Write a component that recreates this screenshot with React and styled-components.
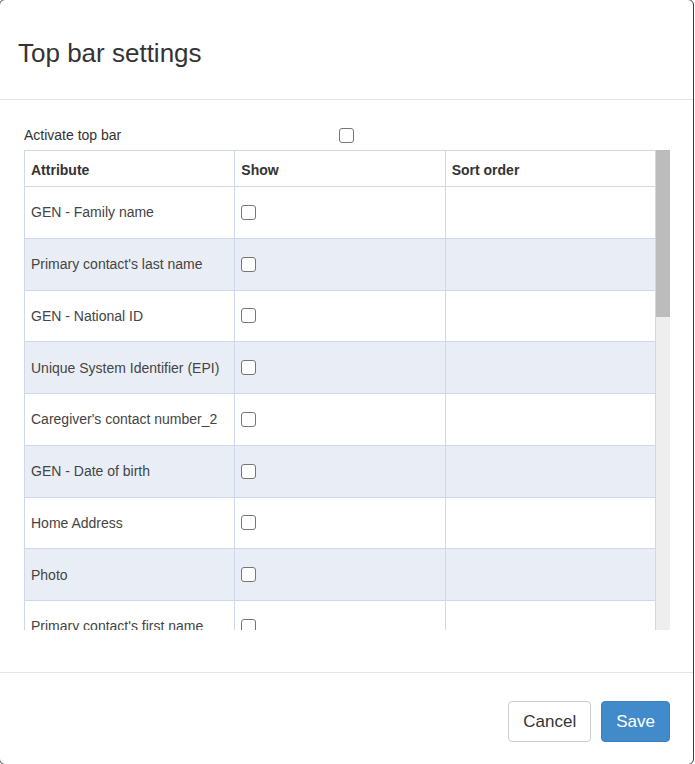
import React from 'react';
import styled, { createGlobalStyle } from 'styled-components';

const GlobalStyle = createGlobalStyle`
    html, body {
        margin: 0;
        padding: 0;
        background: #ffffff;
        overflow: hidden;
    }
    body {
        font-family: "Liberation Sans", Arial, sans-serif;
        color: #333;
    }
    * {
        box-sizing: border-box;
    }
`;

const Modal = styled.div`
    width: 695px;
    height: 766px;
    margin: -1px 0 0 -1px;
    background: #fff;
    border: 1px solid #3d3d3d;
    border-radius: 6px;
    display: flex;
    flex-direction: column;
    overflow: hidden;
`;

const Header = styled.div`
    height: 100px;
    flex: none;
    display: flex;
    align-items: center;
    padding: 0 18px;
    border-bottom: 1px solid #e5e5e5;
`;

const Title = styled.h4`
    margin: 0;
    font-size: 26px;
    font-weight: 400;
    color: #333;
    padding-top: 8px;
`;

const Body = styled.div`
    flex: none;
    height: 572px;
    padding: 20px 23px 0 24px;
`;

const SettingRow = styled.div`
    display: grid;
    grid-template-columns: 315px 1fr;
    align-items: center;
    height: 30px;
    font-size: 14px;
    color: #333;
`;

const Check = styled.input.attrs({ type: 'checkbox' })`
    appearance: none;
    -webkit-appearance: none;
    width: 15px;
    height: 15px;
    margin: 0;
    border: 1px solid #767676;
    border-radius: 3px;
    background: #fff;
    display: block;
`;

const ScrollBox = styled.div`
    height: 480px;
    display: flex;
`;

const TableViewport = styled.div`
    flex: 1;
    height: 100%;
    overflow: hidden;
`;

const ScrollTrack = styled.div`
    width: 14px;
    flex: none;
    background: #eeeeee;
`;

const ScrollThumb = styled.div`
    height: 167px;
    background: #bcbcbc;
`;

const Table = styled.table`
    width: 100%;
    table-layout: fixed;
    border-collapse: collapse;
    font-size: 14px;
`;

const Th = styled.th`
    height: 36px;
    padding: 2px 6px 0;
    text-align: left;
    font-weight: 700;
    color: #333;
    border: 1px solid #cdd9ea;
`;

const Row = styled.tr`
    background: ${({ $alt }) => ($alt ? '#e9eef6' : '#ffffff')};
`;

const Td = styled.td`
    height: 51.75px;
    padding: 0 6px;
    color: #444;
    border: 1px solid #cdd9ea;
    white-space: nowrap;
    overflow: hidden;
`;

const Footer = styled.div`
    flex: 1;
    border-top: 1px solid #e5e5e5;
    display: flex;
    justify-content: flex-end;
    align-items: flex-start;
    gap: 10px;
    padding: 28px 23px 0 24px;
`;

const Button = styled.button`
    height: 41px;
    padding: 0 14px;
    font-family: "Liberation Sans", Arial, sans-serif;
    font-size: 17px;
    border-radius: 4px;
    border: 1px solid ${({ $primary }) => ($primary ? '#3a80c2' : '#cccccc')};
    background: ${({ $primary }) => ($primary ? '#428bca' : '#ffffff')};
    color: ${({ $primary }) => ($primary ? '#ffffff' : '#333333')};
    cursor: pointer;
`;

const attributes = [
    "GEN - Family name",
    "Primary contact's last name",
    "GEN - National ID",
    "Unique System Identifier (EPI)",
    "Caregiver's contact number_2",
    "GEN - Date of birth",
    "Home Address",
    "Photo",
    "Primary contact's first name",
    "GEN - Given name",
    "GEN - Sex",
    "Phone number",
    "Email",
    "Mother's name",
    "Father's name",
    "Place of birth",
    "Caregiver's name",
    "Caregiver's contact number",
    "Village",
    "District",
    "Health facility",
    "Registration date",
    "Age",
    "Occupation",
    "Blood group",
    "Marital status",
];

const App = () => {
    return (
        <>
            <GlobalStyle />
            <Modal>
                <Header>
                    <Title>Top bar settings</Title>
                </Header>
                <Body>
                    <SettingRow>
                        <span>Activate top bar</span>
                        <Check />
                    </SettingRow>
                    <ScrollBox>
                        <TableViewport>
                            <Table>
                                <thead>
                                    <tr>
                                        <Th>Attribute</Th>
                                        <Th>Show</Th>
                                        <Th>Sort order</Th>
                                    </tr>
                                </thead>
                                <tbody>
                                    {attributes.map((name, i) => (
                                        <Row key={name} $alt={i % 2 === 1}>
                                            <Td>{name}</Td>
                                            <Td><Check /></Td>
                                            <Td />
                                        </Row>
                                    ))}
                                </tbody>
                            </Table>
                        </TableViewport>
                        <ScrollTrack>
                            <ScrollThumb />
                        </ScrollTrack>
                    </ScrollBox>
                </Body>
                <Footer>
                    <Button>Cancel</Button>
                    <Button $primary>Save</Button>
                </Footer>
            </Modal>
        </>
    );
};

export default App;
